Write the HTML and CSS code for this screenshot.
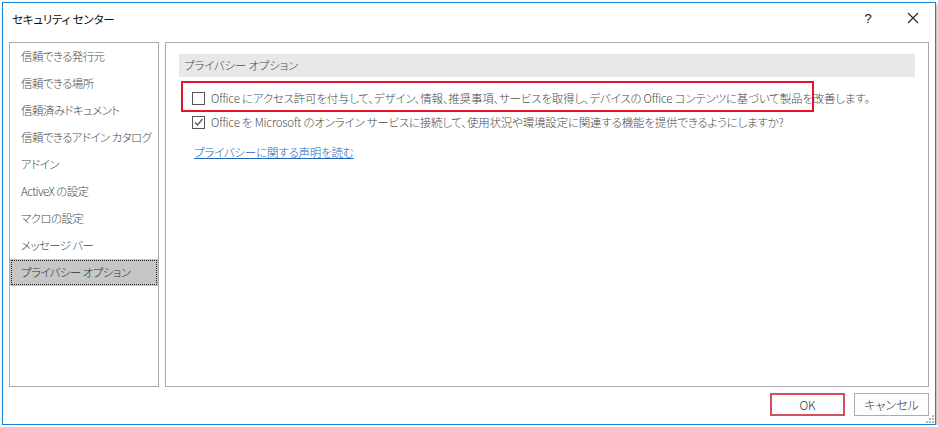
FILE: index.html
```html
<!DOCTYPE html>
<html lang="ja">
<head>
    <meta charset="UTF-8">
    <title>セキュリティ センター</title>
    <link rel="stylesheet" href="styles.css">
</head>
<body>
    <div class="window">
        <div class="titlebar">
            <span class="title">セキュリティ センター</span>
            <span class="help">?</span>
            <span class="close">
                <svg width="12" height="12" viewBox="0 0 12 12"><path d="M1 1L11 11M11 1L1 11" stroke="#222" stroke-width="1.1" fill="none"/></svg>
            </span>
        </div>
        <div class="content">
            <ul class="nav">
                <li>信頼できる発行元</li>
                <li>信頼できる場所</li>
                <li>信頼済みドキュメント</li>
                <li>信頼できるアドイン カタログ</li>
                <li>アドイン</li>
                <li>ActiveX の設定</li>
                <li>マクロの設定</li>
                <li>メッセージ バー</li>
                <li class="selected"><span>プライバシー オプション</span></li>
            </ul>
            <div class="main">
                <div class="section-head">プライバシー オプション</div>
                <div class="option">
                    <span class="check"></span>
                    <span>Office にアクセス許可を付与して、デザイン、情報、推奨事項、サービスを取得し、デバイスの Office コンテンツに基づいて製品を改善します。</span>
                </div>
                <div class="option">
                    <span class="check">
                        <svg width="11" height="11" viewBox="0 0 11 11"><path d="M2 5.5L4.5 8L9.5 2" stroke="#555" stroke-width="1.3" fill="none"/></svg>
                    </span>
                    <span>Office を Microsoft のオンライン サービスに接続して、使用状況や環境設定に関連する機能を提供できるようにしますか?</span>
                </div>
                <a href="#" class="link">プライバシーに関する声明を読む</a>
                <div class="highlight"></div>
            </div>
        </div>
        <div class="buttons">
            <button class="btn ok">OK</button>
            <button class="btn">キャンセル</button>
        </div>
        <svg class="grip" width="8" height="8" viewBox="0 0 8 8">
            <rect x="6" y="0" width="2" height="2" fill="#b8b8b8"/>
            <rect x="3" y="3" width="2" height="2" fill="#b8b8b8"/>
            <rect x="6" y="3" width="2" height="2" fill="#b8b8b8"/>
            <rect x="0" y="6" width="2" height="2" fill="#b8b8b8"/>
            <rect x="3" y="6" width="2" height="2" fill="#b8b8b8"/>
            <rect x="6" y="6" width="2" height="2" fill="#b8b8b8"/>
        </svg>
    </div>
</body>
</html>
```

FILE: styles.css
```css
body {
  margin: 0;
  background: #fff;
  font-family: "Noto Sans CJK JP", "Noto Sans", sans-serif;
  font-size: 11.5px;
  font-weight: 300;
  letter-spacing: -0.2px;
  font-feature-settings: "palt";
  color: #4a4a4a;
}

.window {
  position: relative;
  box-sizing: border-box;
  width: 934px;
  height: 423px;
  margin: 2px 0 0 2px;
  border: 1px solid #1883d7;
  background: #fff;
  box-shadow: 1px 2px 3px rgba(0, 0, 0, 0.35);
}

.titlebar {
  display: flex;
  align-items: center;
  height: 30px;
  padding-left: 9px;
  color: #111;
  font-weight: 400;
}

.title {
  flex: 1;
  padding-top: 1px;
}

.help {
  width: 14px;
  margin-right: 32px;
  font-family: "Liberation Sans", sans-serif;
  font-size: 13px;
  text-align: center;
}

.close {
  display: flex;
  width: 12px;
  margin-right: 16px;
}

.content {
  display: flex;
  gap: 6px;
  height: 345px;
  margin-top: 9px;
  padding: 0 6px;
}

.nav {
  box-sizing: border-box;
  width: 150px;
  margin: 0;
  padding: 0;
  list-style: none;
  border: 1px solid #a9a9a9;
}

.nav li {
  height: 27px;
  line-height: 27px;
  padding-left: 11px;
  letter-spacing: -0.6px;
  white-space: nowrap;
}

.nav .selected {
  box-sizing: border-box;
  background: #c6c6c6;
  outline: 1px dotted #222;
  outline-offset: -2px;
  color: #333;
}

.main {
  position: relative;
  flex: 1;
  border: 1px solid #a9a9a9;
}

.section-head {
  height: 23px;
  line-height: 23px;
  margin: 11px 13px 0;
  padding-left: 5px;
  background: #e8e8e8;
}

.option {
  display: flex;
  align-items: center;
  gap: 6px;
  height: 24px;
  margin-left: 26px;
  white-space: nowrap;
}

.section-head + .option {
  margin-top: 9px;
}

.check {
  display: flex;
  align-items: center;
  justify-content: center;
  box-sizing: border-box;
  width: 13px;
  height: 13px;
  border: 1px solid #555;
  background: #fff;
}

.link {
  display: inline-block;
  margin: 9px 0 0 28px;
  line-height: 18px;
  color: #1e63b5;
}

.highlight {
  position: absolute;
  left: 15px;
  top: 38px;
  box-sizing: border-box;
  width: 633px;
  height: 31px;
  border: 2px solid #e8102a;
}

.buttons {
  display: flex;
  justify-content: flex-end;
  gap: 9px;
  margin-top: 6px;
  padding-right: 6px;
}

.btn {
  box-sizing: border-box;
  width: 75px;
  height: 23px;
  padding: 0;
  border: 1px solid #adadad;
  background: #fdfdfd;
  font: inherit;
  font-size: 12px;
  color: #333;
}

.btn.ok {
  border: 2px solid #d24f5b;
}

.grip {
  position: absolute;
  right: 1px;
  bottom: 1px;
}
```
